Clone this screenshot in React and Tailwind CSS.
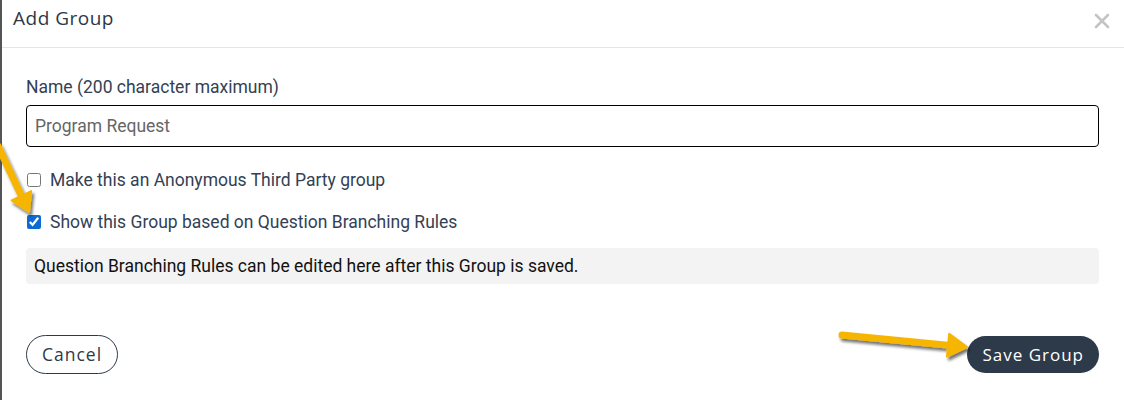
import React, { useState } from 'react'

const Arrow = ({ x1, y1, x2, y2, head = 18, width = 7 }) => {
  const dx = x2 - x1
  const dy = y2 - y1
  const len = Math.hypot(dx, dy)
  const ux = dx / len
  const uy = dy / len
  const bx = x2 - ux * head
  const by = y2 - uy * head
  const px = -uy * (head * 0.6)
  const py = ux * (head * 0.6)
  return (
    <g>
      <line x1={x1} y1={y1} x2={bx + ux * 2} y2={by + uy * 2} stroke="#f6b500" strokeWidth={width} strokeLinecap="round" />
      <polygon
        points={`${x2},${y2} ${bx + px},${by + py} ${bx - px},${by - py}`}
        fill="#f6b500"
        stroke="#f6b500"
        strokeWidth="2"
        strokeLinejoin="round"
      />
    </g>
  )
}

const App = () => {
  const [anon, setAnon] = useState(false)
  const [branch, setBranch] = useState(true)

  return (
    <div className="relative w-[1124px] h-[400px] bg-white overflow-hidden font-['Roboto',sans-serif]">
      <div className="h-full border-l-2 border-[#555] bg-white flex flex-col">
        {/* Header */}
        <div className="flex items-center justify-between h-[48px] pl-[11px] pr-[14px] border-b border-[#e5e5e5]">
          <h2 className="text-[19px] text-[#2d3748] font-['Open_Sans',sans-serif] tracking-[0.5px] -mt-[10px]">Add Group</h2>
          <button className="text-[#c4c4c4] -mt-[6px]" aria-label="Close">
            <svg width="16" height="16" viewBox="0 0 16 16">
              <path d="M2 2 L14 14 M14 2 L2 14" stroke="currentColor" strokeWidth="2.6" strokeLinecap="round" />
            </svg>
          </button>
        </div>

        {/* Body */}
        <div className="pl-[24px] pr-[25px] pt-[29px]">
          <label className="block text-[17.5px] text-[#334155] leading-[20px]">Name (200 character maximum)</label>
          <input
            defaultValue="Program Request"
            className="mt-[8px] w-full h-[42px] border border-black rounded-[4px] px-[8px] text-[17.5px] text-[#666] outline-none"
          />

          <label className="mt-[22px] flex items-center gap-[9px] text-[17.5px] text-[#334155] h-[22px]">
            <input
              type="checkbox"
              checked={anon}
              onChange={() => setAnon(!anon)}
              className="w-[14px] h-[14px] ml-[1px] accent-[#0b6bd3]"
            />
            Make this an Anonymous Third Party group
          </label>

          <label className="mt-[20px] flex items-center gap-[9px] text-[17.5px] text-[#334155] h-[22px]">
            <input
              type="checkbox"
              checked={branch}
              onChange={() => setBranch(!branch)}
              className="w-[14px] h-[14px] ml-[1px] accent-[#0b6bd3]"
            />
            Show this Group based on Question Branching Rules
          </label>

          <div className="mt-[15px] h-[36px] bg-[#f3f3f3] rounded-[4px] px-[8px] flex items-center text-[17.5px] text-[#111]">
            Question Branching Rules can be edited here after this Group is saved.
          </div>
        </div>

        {/* Footer */}
        <div className="mt-auto mb-[26px] pl-[24px] pr-[25px] flex items-center justify-between">
          <button className="h-[39px] px-[15px] rounded-full border border-[#2d3a4a] text-[17.5px] tracking-[1px] text-[#2d3a4a] font-['Open_Sans',sans-serif]">
            Cancel
          </button>
          <button className="h-[37px] px-[15px] rounded-full bg-[#2d3a4a] text-[17px] tracking-[1px] text-white font-['Open_Sans',sans-serif]">
            Save Group
          </button>
        </div>
      </div>

      {/* Annotation arrows */}
      <svg className="absolute inset-0 pointer-events-none" width="1124" height="400">
        <defs>
          <filter id="sh" x="-20%" y="-20%" width="140%" height="140%">
            <feDropShadow dx="2" dy="3" stdDeviation="1.5" floodColor="#000" floodOpacity="0.55" />
          </filter>
        </defs>
        <g filter="url(#sh)">
          <Arrow x1={-2} y1={146} x2={29} y2={212} head={18} width={7} />
          <Arrow x1={842} y1={335} x2={967} y2={347} head={19} width={7} />
        </g>
      </svg>
    </div>
  )
}

export default App
